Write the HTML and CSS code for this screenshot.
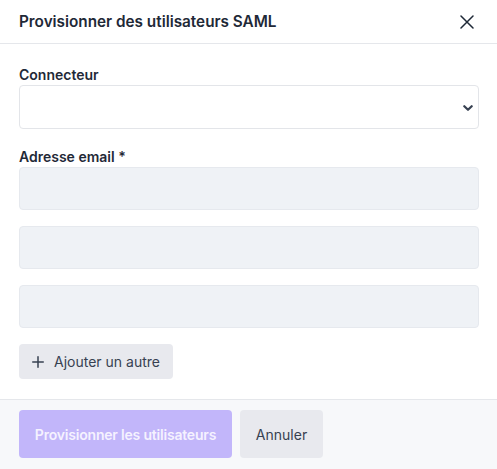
FILE: index.html
```html
<!DOCTYPE html>
<html lang="fr">
<head>
<meta charset="utf-8">
<title>Provisionner des utilisateurs SAML</title>
<link rel="stylesheet" href="styles.css">
</head>
<body>
<div class="modal">
  <header class="modal-header">
    <h2 class="modal-title">Provisionner des utilisateurs SAML</h2>
    <button class="close" type="button" aria-label="Fermer">
      <svg width="14" height="14" viewBox="0 0 14 14" fill="none" stroke="currentColor" stroke-width="1.5" stroke-linecap="round"><path d="M1 1 13 13M13 1 1 13"/></svg>
    </button>
  </header>
  <div class="modal-body">
    <div class="field">
      <label class="label">Connecteur</label>
      <div class="select">
        <svg class="chev" width="10" height="6" viewBox="0 0 10 6" fill="none" stroke="currentColor" stroke-width="2.2" stroke-linecap="round" stroke-linejoin="round"><path d="M1.3 1.2 5 4.8 8.7 1.2"/></svg>
      </div>
    </div>
    <div class="field field-email">
      <label class="label">Adresse email *</label>
      <div class="inputs">
        <div class="input"></div>
        <div class="input"></div>
        <div class="input"></div>
      </div>
    </div>
    <button class="add" type="button">
      <svg width="12" height="12" viewBox="0 0 12 12" fill="none" stroke="currentColor" stroke-width="1.5" stroke-linecap="round"><path d="M6 0.75v10.5M0.75 6h10.5"/></svg>
      <span>Ajouter un autre</span>
    </button>
  </div>
  <footer class="modal-footer">
    <button class="btn btn-primary" type="button">Provisionner les utilisateurs</button>
    <button class="btn btn-secondary" type="button">Annuler</button>
  </footer>
</div>
</body>
</html>
```
FILE: styles.css
```css
* { box-sizing: border-box; }
html, body { margin: 0; padding: 0; }
body {
  background: #ffffff;
  font-family: Inter, "Noto Sans", sans-serif;
  color: #1f2937;
  width: 497px;
  height: 469px;
  overflow: hidden;
}
.modal {
  display: flex;
  flex-direction: column;
  height: 469px;
}
.modal-header {
  height: 44px;
  border-bottom: 1px solid #e5e7eb;
  display: flex;
  align-items: center;
  justify-content: space-between;
  padding: 0 23px 0 19px;
}
.modal-title {
  margin: 0;
  font-size: 15.3px;
  font-weight: 600;
  line-height: 20px;
  color: #1f2937;
}
.close {
  border: 0;
  background: none;
  padding: 0;
  color: #1f2937;
  display: flex;
  width: 14px;
  height: 14px;
}
.modal-body {
  padding: 21px 18px 20px 19px;
  display: flex;
  flex-direction: column;
  align-items: flex-start;
}
.field { width: 100%; }
.field-email { margin-top: 18px; }
.label {
  display: block;
  font-size: 14px;
  font-weight: 600;
  line-height: 20px;
  color: #1f2937;
}
.select {
  height: 44px;
  border: 1px solid #e3e5e9;
  border-radius: 4px;
  background: #fff;
  display: flex;
  align-items: center;
  justify-content: flex-end;
  padding-right: 5px;
  color: #374151;
}
.chev { margin-top: 2px; }
.inputs {
  display: flex;
  flex-direction: column;
  gap: 16px;
}
.input {
  height: 43px;
  background: #eff2f6;
  border: 1px solid #e6e9ee;
  border-radius: 4px;
}
.add {
  margin-top: 16px;
  height: 35px;
  width: 154px;
  border: 0;
  border-radius: 4px;
  background: #e8e9ee;
  color: #374151;
  font-family: inherit;
  font-size: 14px;
  display: flex;
  align-items: center;
  gap: 10px;
  padding: 0 13px;
}
.modal-footer {
  flex: 1;
  background: #f7f8fa;
  border-top: 1px solid #e5e7eb;
  display: flex;
  gap: 8px;
  padding: 10px 19px;
  align-items: flex-start;
}
.btn {
  height: 48px;
  border: 0;
  border-radius: 4px;
  font-family: inherit;
  font-size: 14px;
  padding: 0;
  white-space: nowrap;
  text-align: center;
}
.btn-primary {
  width: 213px;
  background: #c2b6fa;
  color: #f5f2ff;
  font-weight: 600;
  letter-spacing: -0.2px;
}
.btn-secondary {
  width: 83px;
  background: #e8e9ee;
  color: #374151;
  font-weight: 400;
}
```
